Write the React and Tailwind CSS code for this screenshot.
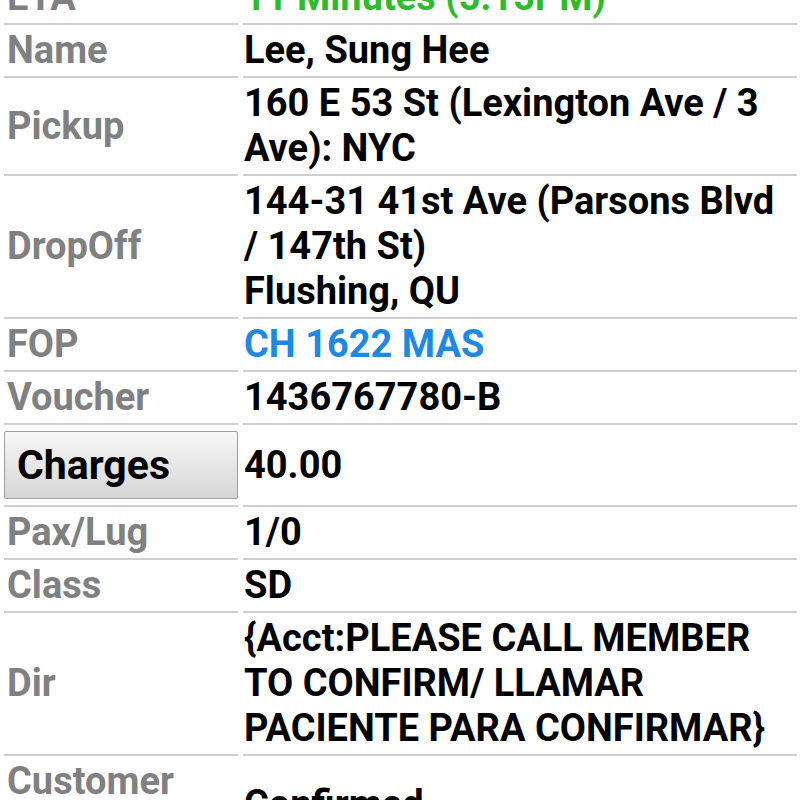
import React from 'react';

const rows = [
  { label: 'ETA', value: ['11 Minutes (5:15PM)'], tone: 'text-[#2cbb2c]' },
  { label: 'Name', value: ['Lee, Sung Hee'] },
  { label: 'Pickup', value: ['160 E 53 St (Lexington Ave / 3 Ave): NYC'] },
  { label: 'DropOff', value: ['144-31 41st Ave (Parsons Blvd / 147th St)', 'Flushing, QU'] },
  { label: 'FOP', value: ['CH 1622 MAS'], tone: 'text-[#1e88e5]' },
  { label: 'Voucher', value: ['1436767780-B'] },
  { label: 'Charges', value: ['40.00'], button: true },
  { label: 'Pax/Lug', value: ['1/0'] },
  { label: 'Class', value: ['SD'] },
  { label: 'Dir', value: ['{Acct:PLEASE CALL MEMBER TO CONFIRM/ LLAMAR PACIENTE PARA CONFIRMAR}'] },
  { label: 'Customer Status', value: ['Confirmed'] },
];

const App = () => {
  return (
    <div className="w-[800px] h-[800px] overflow-hidden bg-white font-['Roboto',sans-serif] font-bold">
      <div className="-mt-[28px] grid grid-cols-[234px_1fr] gap-x-[5px] pl-[4px] pr-[3px]">
        {rows.map((row) => (
          <React.Fragment key={row.label}>
            <div className="flex items-center border-b-2 border-[#cfcfcf]">
              {row.button ? (
                <div className="w-full my-[6px] h-[68px] flex items-center px-[12px] border border-[#9e9e9e] rounded-[2px] bg-gradient-to-b from-[#f7f7f7] to-[#d6d6d6] text-black text-[41px] leading-none">
                  {row.label}
                </div>
              ) : (
                <div className="px-[3px] py-[3px] text-[38px] leading-[45px] text-[#808080]">{row.label}</div>
              )}
            </div>
            <div className="flex items-center border-b-2 border-[#cfcfcf]">
              <div className={`py-[3px] pl-[1px] text-[38px] leading-[45px] ${row.tone || 'text-black'}`}>
                {row.value.map((line) => (
                  <div key={line}>{line}</div>
                ))}
              </div>
            </div>
          </React.Fragment>
        ))}
      </div>
    </div>
  );
};

export default App;
